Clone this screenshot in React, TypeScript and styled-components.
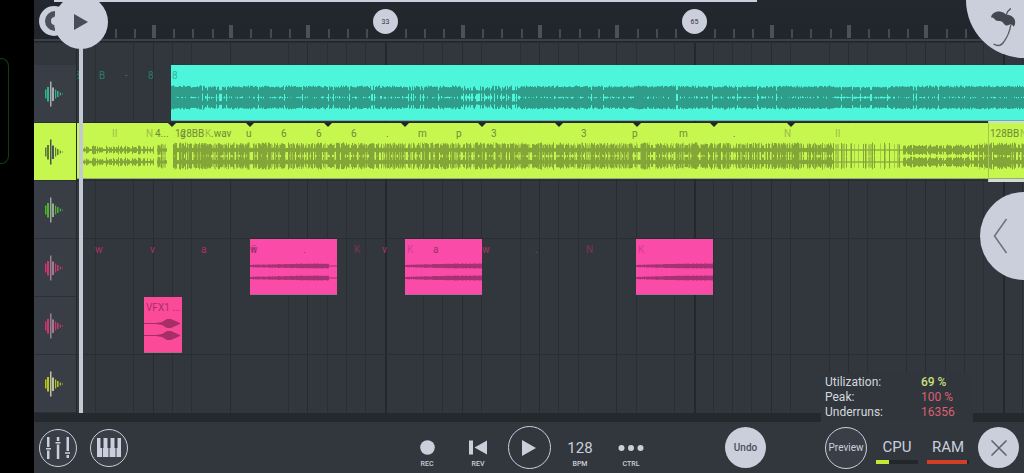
import React from "react";
import styled, { createGlobalStyle, css } from "styled-components";

const GlobalStyle = createGlobalStyle`
  * { box-sizing: border-box; }
  body { margin: 0; background: #000; overflow: hidden; }
  body, button { font-family: Roboto, "Liberation Sans", sans-serif; }
  button { border: 0; padding: 0; margin: 0; cursor: pointer; }
  svg { display: block; }
`;

const silver = "#cacfdb";

const Screen = styled.div`
  display: flex;
  min-height: 100vh;
  background: #000;
  overflow: hidden;
`;

const Gutter = styled.div`
  flex: 0 0 34px;
`;

const EdgeOutline = styled.div`
  width: 9px;
  height: 106px;
  margin-top: 58px;
  border: 1px solid #0e4016;
  border-left: 0;
  border-radius: 0 8px 8px 0;
`;

const Studio = styled.main`
  position: relative;
  flex: 1;
  min-width: 0;
  display: flex;
  flex-direction: column;
  background: #32373e;
`;

const Ruler = styled.header`
  position: relative;
  height: 43px;
  background: linear-gradient(#23272f, #20262b);
  border-bottom: 1px solid #292e34;
`;

const RulerTicks = styled.svg`
  width: 100%;
  height: 42px;
`;

const SongProgress = styled.div`
  position: absolute;
  top: 0;
  left: 20px;
  width: 71%;
  height: 2px;
  background: ${silver};
`;

const round = css`
  display: flex;
  align-items: center;
  justify-content: center;
  border-radius: 50%;
`;

const BarMarker = styled.button<{ $x: number }>`
  ${round}
  position: absolute;
  top: 9px;
  left: ${(p) => p.$x}px;
  width: 25px;
  height: 25px;
  background: ${silver};
  color: #30343c;
  font-size: 7px;
`;

const LoopButton = styled.button`
  ${round}
  position: absolute;
  top: 6px;
  left: 5px;
  width: 30px;
  height: 30px;
  background: ${silver};
`;

const PlayheadHandle = styled.button`
  ${round}
  position: absolute;
  z-index: 3;
  top: -5px;
  left: 20px;
  width: 54px;
  height: 54px;
  background: ${silver};
`;

const BrandButton = styled.button`
  position: absolute;
  z-index: 3;
  top: 0;
  right: 0;
  display: flex;
  align-items: flex-start;
  width: 58px;
  height: 58px;
  padding: 7px 0 0 24px;
  border-radius: 0 0 0 58px;
  background: ${silver};
`;

const DrawerButton = styled.button`
  position: absolute;
  z-index: 3;
  top: 192px;
  right: 0;
  width: 44px;
  height: 88px;
  padding-left: 13px;
  border-radius: 44px 0 0 44px;
  background: ${silver};
`;

const Arranger = styled.section`
  flex: 1;
  display: flex;
`;

const TrackHeads = styled.div`
  flex: 0 0 43px;
  display: flex;
  flex-direction: column;
  padding-top: 22px;
  border-right: 1px solid #23282d;
`;

const TrackHead = styled.button<{ $bg?: string }>`
  flex: 1 0 58px;
  display: flex;
  align-items: center;
  justify-content: center;
  padding-right: 2px;
  background: ${(p) => p.$bg ?? "#393e46"};
  border-bottom: 1px solid #2c3137;
`;

const Timeline = styled.div`
  position: relative;
  flex: 1;
  min-width: 0;
  display: flex;
  flex-direction: column;
  padding-top: 22px;
  overflow: hidden;
`;

const GridLines = styled.svg`
  position: absolute;
  top: 0;
  left: 0;
  width: 100%;
  height: 100%;
`;

const Playhead = styled.div`
  position: absolute;
  z-index: 2;
  top: 0;
  bottom: 0;
  left: 2px;
  width: 4px;
  background: #c3c9d3;
`;

const Lane = styled.div<{ $line?: string }>`
  position: relative;
  flex: 1 0 58px;
  border-bottom: 1px solid ${(p) => p.$line ?? "transparent"};
`;

const ClipBox = styled.div<{ $x: number; $w?: number; $bg: string }>`
  position: absolute;
  top: 0;
  left: ${(p) => p.$x}px;
  ${(p) => (p.$w ? `width: ${p.$w}px;` : "right: 0;")}
  height: 56px;
  overflow: hidden;
  background: ${(p) => p.$bg};
  border-bottom: 1px solid rgba(120, 130, 130, 0.6);
`;

const Selection = styled.div`
  position: absolute;
  top: -2px;
  left: 911px;
  right: 0;
  height: 61px;
  border: solid #d4d9dc;
  border-width: 2px 0 3px;
  border-left: 1px solid #a6c455;
`;

const Tag = styled.span<{ $x: number; $color: string }>`
  position: absolute;
  top: 4px;
  left: ${(p) => p.$x}px;
  color: ${(p) => p.$color};
  font-size: 10px;
  line-height: 13px;
  white-space: pre;
`;

const Cue = styled.i<{ $x: number }>`
  position: absolute;
  top: 0;
  left: ${(p) => p.$x - 4}px;
  border: 4px solid transparent;
  border-top-color: #20272b;
  border-bottom: 0;
`;

const Divider = styled.div`
  height: 9px;
  background: #23292d;
`;

const Toolbar = styled.footer`
  display: grid;
  grid-template-columns: 1fr auto 1fr;
  align-items: center;
  height: 51px;
  padding: 0 5px;
  background: #32373e;
  color: ${silver};
`;

const LeftTools = styled.div`
  display: flex;
  gap: 13px;
`;

const Transport = styled.div`
  display: grid;
  grid-template-columns: repeat(5, 44px);
  gap: 7px;
  align-items: center;
  justify-items: center;
`;

const RightTools = styled.div`
  display: flex;
  align-items: center;
  justify-content: flex-end;
  gap: 9px;
`;

const RingButton = styled.button<{ $size: number }>`
  ${round}
  width: ${(p) => p.$size}px;
  height: ${(p) => p.$size}px;
  border: 1px solid ${silver};
  background: #3a3f47;
  color: ${silver};
  font-size: 10px;
`;

const PlayRing = styled(RingButton)`
  background: transparent;
`;

const SolidButton = styled.button`
  ${round}
  width: 41px;
  height: 41px;
  background: ${silver};
  color: #4a4e58;
  font-size: 10px;
  font-weight: 500;
`;

const UndoButton = styled(SolidButton)`
  margin-right: 50px;
`;

const Action = styled.button`
  display: flex;
  flex-direction: column;
  align-items: center;
  gap: 2px;
  width: 44px;
  padding-top: 12px;
  background: transparent;
  color: ${silver};
  font-size: 7px;
  font-weight: 500;
  line-height: 10px;
`;

const ActionGlyph = styled.span`
  display: flex;
  align-items: center;
  height: 18px;
  font-size: 15px;
  font-weight: 400;
`;

const MeterBox = styled.div`
  position: relative;
  display: flex;
  flex-direction: column;
  align-items: center;
  gap: 4px;
  width: 42px;
  padding-top: 6px;
  font-size: 15px;
  line-height: 18px;
`;

const MeterTrack = styled.div`
  width: 100%;
  height: 4px;
  background: #22272b;
`;

const MeterFill = styled.div<{ $color: string }>`
  height: 100%;
  background: ${(p) => p.$color};
`;

const StatsPanel = styled.dl`
  position: absolute;
  z-index: 2;
  right: 51px;
  bottom: 51px;
  display: grid;
  grid-template-columns: 96px 1fr;
  align-content: center;
  width: 152px;
  height: 49px;
  margin: 0;
  padding-left: 4px;
  background: #31363d;
  color: #d3d8de;
  font-size: 12px;
  line-height: 15px;
`;

const StatName = styled.dt``;

const StatValue = styled.dd<{ $color: string; $strong?: boolean }>`
  margin: 0;
  color: ${(p) => p.$color};
  font-weight: ${(p) => (p.$strong ? 500 : 400)};
`;

/* Timeline geometry: one step is two bars. */
const STEP = 309 / 16;
const STEPS = 160;
const hiddenLines = new Set([0, 2, 7, 9, 10, 17, 22, 27, 30, 38, 42]);
const steps = Array.from({ length: STEPS }, (_, i) => i);
const stepX = (i: number) => Math.floor(i * STEP);

function random(seed: number) {
  let s = seed;
  return () => {
    s = (s * 1664525 + 1013904223) % 4294967296;
    return s / 4294967296;
  };
}

type Span = { from: number; to: number; low: number; high: number; fill: number; thin?: boolean };

function wavePath(spans: Span[], centers: [number, number], seed: number) {
  const next = random(seed);
  let d = "";
  for (const s of spans) {
    for (let x = s.from; x < s.to; x += 1) {
      const a = next() < s.fill ? s.low + next() * (s.high - s.low) : s.thin ? 0 : s.low * 0.4;
      for (const c of centers) {
        const h = a + (a ? next() * 0.8 : 0.4);
        d += `M${x} ${(c - h).toFixed(1)}h1v${(h * 2).toFixed(1)}h-1z`;
      }
    }
  }
  return d;
}

const tealWave = wavePath(
  [
    { from: 0, to: 290, low: 4, high: 6, fill: 0.93 },
    { from: 290, to: 350, low: 3, high: 6, fill: 0.7 },
    { from: 350, to: 660, low: 4, high: 6, fill: 0.96 },
    { from: 660, to: 720, low: 4, high: 5, fill: 0.85 },
    { from: 720, to: 2400, low: 4, high: 6, fill: 0.97 },
  ],
  [27, 38],
  7
);

const limeWave = wavePath(
  [
    { from: 2, to: 77, low: 2, high: 4, fill: 0.7 },
    { from: 80, to: 90, low: 3, high: 6, fill: 0.4 },
    { from: 96, to: 757, low: 4, high: 7, fill: 0.66 },
    { from: 757, to: 826, low: 5, high: 7, fill: 0.24, thin: true },
    { from: 826, to: 902, low: 3, high: 5, fill: 0.85 },
    { from: 902, to: 2400, low: 4, high: 7, fill: 0.66 },
  ],
  [27, 39],
  21
);

/* Quieter layer drawn under the loud one, so that gaps are only partly clear. */
const limeUnderlay = wavePath(
  [
    { from: 80, to: 90, low: 4, high: 6, fill: 0.8 },
    { from: 96, to: 757, low: 4, high: 7, fill: 0.6 },
    { from: 757, to: 826, low: 5, high: 6, fill: 0.25, thin: true },
    { from: 902, to: 2400, low: 4, high: 7, fill: 0.5 },
  ],
  [27, 39],
  99
);

function pinkWave(width: number, tail: number) {
  const next = random(width);
  let d = "";
  for (let x = 0; x < width; x += 1) {
    const end = width - tail;
    const a = x < end ? 0.9 + Math.min(1.1, (x / width) * 1.8) + next() * 0.5 : 0.4;
    for (const c of [27, 39]) d += `M${x} ${(c - a).toFixed(1)}h1v${(a * 2).toFixed(1)}h-1z`;
  }
  return d;
}

const Wave = ({ d, color, under, underColor }: { d: string; color: string; under?: string; underColor?: string }) => (
  <svg width="2400" height="56" fill={color} aria-hidden="true">
    {under && <path d={under} fill={underColor} />}
    <path d={d} />
  </svg>
);

const TrackIcon = ({ color, core }: { color: string; core: string }) => (
  <svg width="20" height="26" viewBox="0 0 20 26" aria-hidden="true">
    <g fill={color}>
      <path d="M1 8.500h1.500v9H1zM3 6h2v14.500H3zM11 8.500h1.200v9H11zM13 10h1.500v6H13zM15.700 11.500h1.200v3h-1.200zM18 12.500h1v1h-1z" />
    </g>
    <g fill={core}>
      <path d="M6 .500h1.500v25H6zM8 6.500h2v13.500H8z" />
    </g>
  </svg>
);

const PlayGlyph = ({ size, color }: { size: number; color: string }) => (
  <svg width={size} height={size + 2} viewBox="0 0 14 16" aria-hidden="true">
    <path d="M0 0l14 8-14 8z" fill={color} />
  </svg>
);

const tracks = [
  { name: "Track 1", color: "#2db488", core: "#a5abb0" },
  { name: "Track 2", color: "#5d7a3a", core: "#4c5650", bg: "#c6f74f" },
  { name: "Track 3", color: "#48b52a", core: "#9aa59a" },
  { name: "Track 4", color: "#d0336f", core: "#97808e" },
  { name: "Track 5", color: "#d0336f", core: "#97808e" },
  { name: "Track 6", color: "#b9c31f", core: "#bdc29a" },
];

const limeTags: [number, string, boolean?][] = [
  [35, "II", true], [69, "N", true], [78, "4..."], [98, "128BB"], [103, "g"], [128, "K", true], [134, ".wav"],
  [169, "u"], [204, "6"], [239, "6"], [274, "6"], [309, "."], [341, "m"], [379, "p"],
  [414, "3"], [504, "3"], [555, "p"], [602, "m"], [656, "."], [707, "N", true],
  [758, "II", true], [913, "128BB"], [943, "N", true],
];
const tealTags: [number, string][] = [[-3, "B"], [22, "B"], [48, "-"], [71, "8"]];
const pinkTags: [number, string][] = [
  [18, "w"], [73, "v"], [124, "a"], [277, "K"], [305, "v"], [405, "w"], [458, "."], [509, "N"],
];
const pinkClips: { x: number; w: number; tail: number; tags: [number, string][] }[] = [
  { x: 173, w: 87, tail: 8, tags: [[0, "w"], [1, "ii"], [53, "."]] },
  { x: 328, w: 77, tail: 0, tags: [[2, "K"], [28, "a"]] },
  { x: 559, w: 77, tail: 0, tags: [[2, "K"]] },
];

const faintPink = (t: string) => t === "K" || t === "N";

const markers = [{ bar: 33, step: 16 }, { bar: 65, step: 32 }];

function Meter({ label, value, color }: { label: string; value: number; color: string }) {
  return (
    <MeterBox role="meter" aria-label={label} aria-valuenow={value} aria-valuemin={0} aria-valuemax={100}>
      <span>{label}</span>
      <MeterTrack>
        <MeterFill $color={color} style={{ width: `${value}%` }} />
      </MeterTrack>
    </MeterBox>
  );
}

function TimeRuler() {
  return (
    <Ruler>
      <RulerTicks aria-hidden="true">
        {steps.slice(2).map((i) =>
          i % 16 === 0 ? null : i % 4 === 0 ? (
            <rect key={i} x={stepX(i) + 41} y="25" width="4" height="13" fill="#4c5158" />
          ) : (
            <rect key={i} x={stepX(i) + 43} y="29" width="2" height="9" fill="#454a51" />
          )
        )}
        <rect x="0" y="39" width="100%" height="2" fill="#3c4148" />
      </RulerTicks>
      <SongProgress />
      {markers.map((m) => (
        <BarMarker key={m.bar} $x={stepX(m.step) + 30}>{m.bar}</BarMarker>
      ))}
      <LoopButton aria-label="Loop">
        <svg width="24" height="22" viewBox="0 0 24 22" aria-hidden="true">
          <path d="M13 4a7 7 0 0 0 0 14" fill="none" stroke="#4b505b" strokeWidth="6" />
        </svg>
      </LoopButton>
      <PlayheadHandle aria-label="Move playhead">
        <PlayGlyph size={14} color="#474c57" />
      </PlayheadHandle>
    </Ruler>
  );
}

function Lanes() {
  return (
    <Timeline>
      <GridLines aria-hidden="true">
        {steps.map((i) =>
          hiddenLines.has(i) ? null : (
            <rect
              key={i}
              x={stepX(i) - 1}
              y="0"
              width={i % 16 === 0 ? 2 : 1}
              height="100%"
              fill={i % 16 === 0 ? "#23282d" : i % 4 === 0 ? "#262b30" : "#2a2f35"}
            />
          )
        )}
      </GridLines>
      <Playhead />
      <Lane $line="#23292d">
        {tealTags.map(([x, t]) => <Tag key={x} $x={x} $color="#267d68">{t}</Tag>)}
        <ClipBox $x={94} $bg="#4df6db">
          <Wave d={tealWave} color="#2f9d8a" />
          <Tag $x={1} $color="#2fb59c">8</Tag>
        </ClipBox>
      </Lane>
      <Lane $line="#282d32">
        <ClipBox $x={0} $bg="#c6f74f">
          <Wave d={limeWave} color="#84a638" under={limeUnderlay} underColor="#a4ca48" />
          {limeTags.map(([x, t, faint]) => (
            <Tag key={x} $x={x} $color={faint ? "#9dbd48" : "#6f8a3a"}>{t}</Tag>
          ))}
        </ClipBox>
        {[4.95, 9, 13, 17, 21, 25, 29, 33, 37].map((s) => <Cue key={s} $x={stepX(s)} />)}
        <Selection />
      </Lane>
      <Lane $line="#292e34" />
      <Lane>
        {pinkTags.map(([x, t]) => (
          <Tag key={x} $x={x} $color={faintPink(t) ? "#7d3350" : "#b0305e"}>{t}</Tag>
        ))}
        {pinkClips.map((c) => (
          <ClipBox key={c.x} $x={c.x} $w={c.w} $bg="#fa4ba9">
            <Wave d={pinkWave(c.w, c.tail)} color="#a63273" />
            {c.tags.map(([x, t]) => (
              <Tag key={x} $x={x} $color={faintPink(t) ? "#d03f8e" : "#9a3069"}>{t}</Tag>
            ))}
          </ClipBox>
        ))}
      </Lane>
      <Lane $line="#292e34">
        <ClipBox $x={67} $w={38} $bg="#fb4a98">
          <Tag $x={2} $color="#a83068">VFX1 ...</Tag>
          <Wave d="M0 26h12l6-1 5-3h4l9 4v1l-9 4h-4l-5-3-6-1H0zM0 38h12l6-1 5-3h4l9 4v1l-9 4h-4l-5-3-6-1H0z" color="#a63066" />
        </ClipBox>
      </Lane>
      <Lane />
    </Timeline>
  );
}

export default function App() {
  return (
    <>
      <GlobalStyle />
      <Screen>
        <Gutter><EdgeOutline /></Gutter>
        <Studio>
          <TimeRuler />
          <Arranger>
            <TrackHeads>
              {tracks.map((t) => (
                <TrackHead key={t.name} $bg={t.bg} aria-label={t.name}>
                  <TrackIcon color={t.color} core={t.core} />
                </TrackHead>
              ))}
            </TrackHeads>
            <Lanes />
          </Arranger>
          <Divider />
          <Toolbar>
            <LeftTools>
              <RingButton $size={38} aria-label="Mixer">
                <svg width="24" height="22" viewBox="0 0 24 22" fill={silver} aria-hidden="true">
                  <path d="M1 0h2.500v10H1zM1 13.500h2.500V22H1zM0 11h5v1.500H0zM10.800 0h2.500v4h-2.500zM10.800 7.500h2.500V22h-2.500zM9.500 5h5v1.500h-5zM20.500 0H23v14h-2.500zM20.500 18H23v3h-2.500zM19 15.300h5v1.500h-5z" />
                </svg>
              </RingButton>
              <RingButton $size={38} aria-label="Keyboard">
                <svg width="24" height="19" viewBox="0 0 24 19" aria-hidden="true">
                  <path d="M0 0h24v19H0z" fill={silver} />
                  <path d="M3.500 0h3v10h-3zM10.500 0h3v10h-3zM17.500 0h3v10h-3zM5 9h.800v10H5zM11.500 9h1v10h-1zM18.500 9h1v10h-1z" fill="#363b43" />
                </svg>
              </RingButton>
            </LeftTools>
            <Transport>
              <Action>
                <ActionGlyph>
                  <svg width="15" height="15" aria-hidden="true"><circle cx="7.500" cy="7.500" r="7.300" fill={silver} /></svg>
                </ActionGlyph>
                REC
              </Action>
              <Action>
                <ActionGlyph>
                  <svg width="18" height="15" fill={silver} aria-hidden="true"><path d="M0 .500h4v14H0zM18 .500v14L5.500 7.500z" /></svg>
                </ActionGlyph>
                REV
              </Action>
              <PlayRing $size={43} aria-label="Play"><PlayGlyph size={14} color={silver} /></PlayRing>
              <Action>
                <ActionGlyph>128</ActionGlyph>
                BPM
              </Action>
              <Action>
                <ActionGlyph>
                  <svg width="26" height="8" fill={silver} aria-hidden="true">
                    <circle cx="3.500" cy="4" r="3" /><circle cx="13" cy="4" r="3" /><circle cx="22.500" cy="4" r="3" />
                  </svg>
                </ActionGlyph>
                CTRL
              </Action>
            </Transport>
            <RightTools>
              <UndoButton>Undo</UndoButton>
              <RingButton $size={42}>Preview</RingButton>
              <Meter label="CPU" value={31} color="#c5e834" />
              <Meter label="RAM" value={95} color="#d33f26" />
              <SolidButton aria-label="Close">
                <svg width="16" height="16" aria-hidden="true">
                  <path d="M.500 .500l15 15M15.500 .500l-15 15" stroke="#5a5f6b" strokeWidth="1.500" />
                </svg>
              </SolidButton>
            </RightTools>
          </Toolbar>
          <StatsPanel>
            <StatName>Utilization:</StatName>
            <StatValue $color="#cbe07a" $strong>69 %</StatValue>
            <StatName>Peak:</StatName>
            <StatValue $color="#dd5f70">100 %</StatValue>
            <StatName>Underruns:</StatName>
            <StatValue $color="#dd5f70">16356</StatValue>
          </StatsPanel>
          <BrandButton aria-label="Main menu">
            <svg width="27" height="40" viewBox="690 22 80 120" aria-hidden="true">
              <path d="M693 54C692 42 708 33 722 36c7 1 12 4 16 9 14 0 27 8 27 22 0 5-1 10-4 14-4-6-10-8-15-5-5 2-11 2-15-4-4-7-9-9-15-8-8 0-12-3-15-8-3-3-6-3-8-2z" fill="#424750" />
              <path d="M738 46q4-13 14-20M752 76q-5 28-20 49-12 20-32 8" fill="none" stroke="#565b65" strokeWidth="4" />
            </svg>
          </BrandButton>
          <DrawerButton aria-label="Open browser">
            <svg width="15" height="36" aria-hidden="true">
              <path d="M13.500 1L1.500 18l12 17" fill="none" stroke="#6b707c" strokeWidth="1.500" />
            </svg>
          </DrawerButton>
        </Studio>
      </Screen>
    </>
  );
}
